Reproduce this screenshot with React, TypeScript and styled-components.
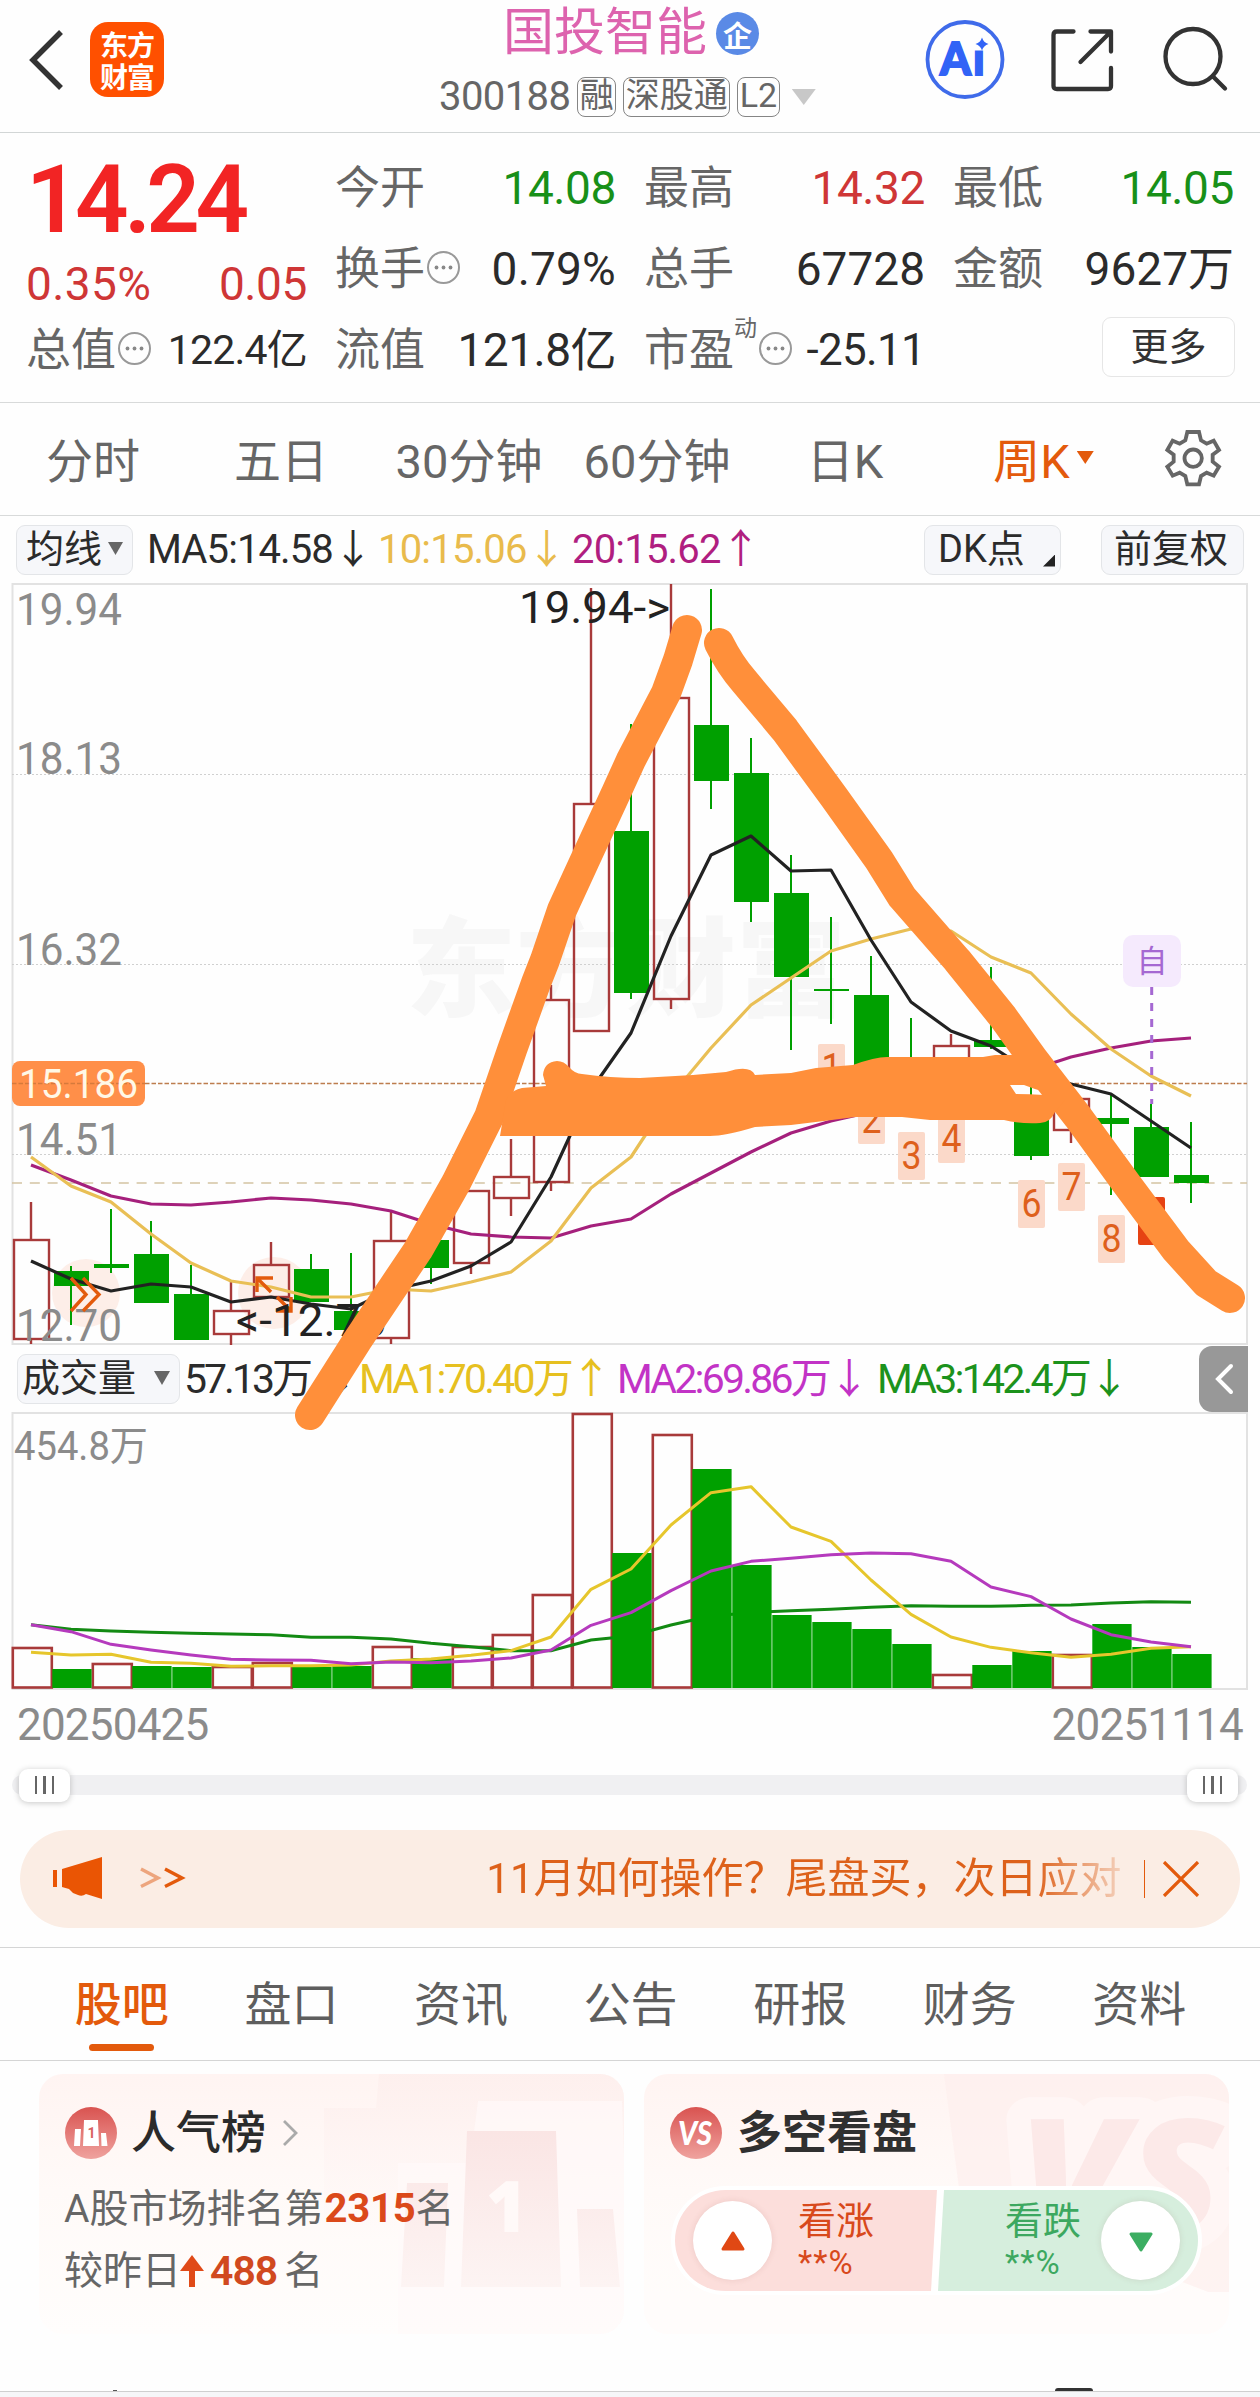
import React from "react";
import styled, { createGlobalStyle } from "styled-components";

const GlobalStyle = createGlobalStyle`
  * { box-sizing: border-box; }
  body { margin: 0; background: #fefefe; }
`;

const FONT = `Roboto, "Noto Sans CJK SC", sans-serif`;
const ORANGE = "#e35a0c";
const GREEN = "#00a000";
const RED = "#a83a3a";

const Page = styled.main`
  width: 1260px;
  height: 2397px;
  overflow: hidden;
  background: #fefefe;
  color: #2b2b2b;
  font-family: ${FONT};
  display: flex;
  flex-direction: column;
`;

const Row = styled.div<{ $gap?: number; $h?: number; $mt?: number; $ml?: string; $mr?: number }>`
  display: flex;
  align-items: center;
  gap: ${(p) => p.$gap ?? 0}px;
  height: ${(p) => (p.$h ? `${p.$h}px` : "auto")};
  margin-top: ${(p) => p.$mt ?? 0}px;
  margin-left: ${(p) => p.$ml ?? "0"};
  margin-right: ${(p) => p.$mr ?? 0}px;
`;

const Txt = styled.span<{ $size: number; $color?: string; $ls?: number; $weight?: number; $ml?: number; $up?: number; $w?: number }>`
  font-size: ${(p) => p.$size}px;
  line-height: 1;
  color: ${(p) => p.$color ?? "#2b2b2b"};
  letter-spacing: ${(p) => p.$ls ?? 0}px;
  font-weight: ${(p) => p.$weight ?? 400};
  margin-left: ${(p) => p.$ml ?? 0}px;
  margin-bottom: ${(p) => p.$up ?? 0}px;
  width: ${(p) => (p.$w ? `${p.$w}px` : "auto")};
  white-space: nowrap;
`;

/* ---------- header ---------- */
const Header = styled.header`
  height: 133px;
  flex: none;
  border-bottom: 1px solid #d2d6d6;
  display: grid;
  grid-template-columns: 420px 1fr 420px;
`;
const HeaderLeft = styled.div`
  display: flex;
  align-items: flex-start;
  padding: 22px 0 0 27px;
  gap: 25px;
`;
const BackIcon = styled.svg`
  margin-top: 7px;
`;
const Logo = styled.div`
  width: 74px;
  height: 75px;
  border-radius: 18px;
  background: #ff5000;
  color: #fff;
  display: grid;
  place-content: center;
  font: 600 28px/32px "Noto Sans CJK SC", sans-serif;
  letter-spacing: -1px;
  text-align: center;
`;
const HeaderMid = styled.div`
  padding: 6px 0 0 19px;
`;
const TitleRow = styled.div`
  display: flex;
  align-items: center;
  height: 55px;
  padding-left: 64px;
  gap: 9px;
`;
const Verified = styled.div`
  width: 43px;
  height: 43px;
  border-radius: 50%;
  background: #5a8ae6;
  color: #fff;
  display: grid;
  place-content: center;
  font: 700 29px/36px "Noto Sans CJK SC", sans-serif;
`;
const SubRow = styled.div`
  display: flex;
  align-items: center;
  gap: 7px;
  height: 42px;
  margin-top: 15px;
`;
const Tag = styled.span`
  height: 40px;
  border: 1.5px solid #858585;
  border-radius: 8px;
  padding: 0 1.5px;
  font-size: 34px;
  line-height: 35px;
  color: #666;
  white-space: nowrap;
`;
const Triangle = styled.i<{ $w: number; $h: number; $c: string; $ml?: number }>`
  width: ${(p) => p.$w}px;
  height: ${(p) => p.$h}px;
  background: ${(p) => p.$c};
  clip-path: polygon(0 0, 100% 0, 50% 100%);
  margin-left: ${(p) => p.$ml ?? 0}px;
  flex: none;
`;
const HeaderRight = styled.div`
  display: flex;
  padding: 18px 0 0 85px;
`;

/* ---------- quote ---------- */
const Quote = styled.section`
  height: 270px;
  flex: none;
  border-bottom: 1px solid #d8dada;
  padding: 14px 27px 0 26px;
  display: grid;
  grid-template-columns: repeat(4, 281px);
  grid-template-rows: repeat(3, 81px);
  column-gap: 28px;
`;
const PriceCell = styled.div`
  grid-row: span 2;
  padding-top: 6px;
`;
const Price = styled.div`
  font-size: 94px;
  line-height: 94px;
  font-weight: 600;
  color: #f22424;
  letter-spacing: -4.6px;
`;
const ChangeRow = styled.div`
  display: flex;
  justify-content: space-between;
  margin-top: 11px;
`;
const Cell = styled.div`
  display: flex;
  align-items: center;
  justify-content: space-between;
`;
const Label = styled.span`
  font-size: 45px;
  line-height: 50px;
  color: #666;
  display: flex;
  align-items: center;
  white-space: nowrap;
  padding-top: 2px;
`;
const InfoIcon = styled.svg`
  margin: -4px 0 0 1px;
`;
const Value = styled.span<{ $c?: string; $size?: number; $ls?: number }>`
  font-size: ${(p) => p.$size ?? 46}px;
  line-height: 50px;
  letter-spacing: ${(p) => p.$ls ?? -0.4}px;
  color: ${(p) => p.$c ?? "#2b2b2b"};
  white-space: nowrap;
  padding-top: 1px;
`;
const Sup = styled.sup`
  font-size: 23px;
  line-height: 24px;
  align-self: flex-start;
  margin-top: -9px;
`;
const MoreButton = styled.button`
  width: 133px;
  height: 60px;
  margin: 0 -1px 5px auto;
  border: 1.5px solid #e6e6e6;
  border-radius: 9px;
  background: #fff;
  color: #333;
  font: 38px/50px ${FONT};
  padding: 0;
`;

/* ---------- period tabs ---------- */
const Periods = styled.nav`
  height: 113px;
  flex: none;
  border-bottom: 1px solid #d8dada;
  display: grid;
  grid-template-columns: repeat(6, 188px) 132px;
`;
const Period = styled.div<{ $on?: boolean }>`
  display: flex;
  align-items: center;
  justify-content: center;
  gap: 7px;
  font-size: 47px;
  color: ${(p) => (p.$on ? ORANGE : "#666")};
  padding: 0 2px 3px ${(p) => (p.$on ? 21 : 0)}px;
  white-space: nowrap;
`;

/* ---------- indicator bars ---------- */
const Indicators = styled.div<{ $h: number; $pl: number }>`
  height: ${(p) => p.$h}px;
  flex: none;
  display: flex;
  align-items: center;
  padding-left: ${(p) => p.$pl}px;
`;
const Chip = styled.div<{ $w: number; $size?: number }>`
  width: ${(p) => p.$w}px;
  height: 50px;
  flex: none;
  border: 1.5px solid #e3e5e8;
  border-radius: 9px;
  background: #f6f7fa;
  display: flex;
  align-items: center;
  justify-content: space-between;
  padding: 0 9px 2px;
  font-size: ${(p) => p.$size ?? 38}px;
  line-height: 1;
  white-space: nowrap;
`;
const ChipText = styled.span<{ $ml: number }>`
  margin-left: ${(p) => p.$ml}px;
`;
const CornerMark = styled.i`
  width: 12px;
  height: 12px;
  background: #222;
  clip-path: polygon(100% 0, 100% 100%, 0 100%);
  align-self: flex-end;
  margin: 0 -4px 5px 0;
`;
const ChartArea = styled.section`
  position: relative;
  height: 1174px;
  flex: none;
  display: flex;
  flex-direction: column;
`;
const Scribble = styled.svg`
  position: absolute;
  left: 0;
  top: 0;
  pointer-events: none;
`;
const Block = styled.svg`
  display: block;
  flex: none;
`;
const Collapse = styled.div`
  margin-left: auto;
  margin-right: 12px;
  width: 49px;
  flex: none;
  height: 66px;
  background: #989898;
  border-radius: 13px 0 0 13px;
  display: grid;
  place-content: center;
`;

/* ---------- dates + range ---------- */
const Dates = styled.div`
  height: 70px;
  flex: none;
  display: flex;
  justify-content: space-between;
  align-items: center;
  padding: 0 17px 0 17px;
`;
const Range = styled.div`
  height: 20px;
  flex: none;
  margin: 15px 13px 0 12px;
  border-radius: 10px;
  background: #f0f0f2;
  display: flex;
  justify-content: space-between;
  align-items: center;
  padding: 0 9px 0 7px;
`;
const Handle = styled.div`
  width: 51px;
  height: 33px;
  border-radius: 9px;
  background: #fff;
  box-shadow: 0 1px 6px rgba(0, 0, 0, 0.22);
  display: flex;
  align-items: center;
  justify-content: center;
  gap: 6px;
`;
const Grip = styled.i`
  width: 2.4px;
  height: 18px;
  background: #666;
`;

/* ---------- promo ---------- */
const Promo = styled.div`
  margin: 35px 20px 0;
  height: 98px;
  flex: none;
  border-radius: 49px;
  background: #fbede4;
  display: flex;
  align-items: center;
  padding: 0 40px 0 31px;
`;
const PromoText = styled.div`
  margin-left: auto;
  font-size: 42px;
  line-height: 60px;
  letter-spacing: 0;
  white-space: nowrap;
  color: transparent;
  background: linear-gradient(90deg, #dd611a 86%, #f6d9c8 101%);
  background-clip: text;
  -webkit-background-clip: text;
`;
const Bar = styled.i`
  width: 1.5px;
  height: 38px;
  background: ${ORANGE};
  margin: 0 17px 0 22px;
`;

/* ---------- content tabs ---------- */
const Tabs = styled.nav`
  margin-top: 19px;
  height: 114px;
  flex: none;
  border-top: 1px solid #d5d5d5;
  border-bottom: 1px solid #d5d5d5;
  display: grid;
  grid-template-columns: repeat(7, 169.6px);
  padding-left: 37px;
`;
const Tab = styled.div<{ $on?: boolean }>`
  display: flex;
  flex-direction: column;
  align-items: center;
  font-size: 47px;
  line-height: 60px;
  padding-top: 27px;
  color: ${(p) => (p.$on ? ORANGE : "#5e5e5e")};
  font-weight: ${(p) => (p.$on ? 500 : 400)};
`;
const Underline = styled.i`
  width: 65px;
  height: 7px;
  border-radius: 4px;
  background: ${ORANGE};
  margin-top: 9px;
`;

/* ---------- cards ---------- */
const Cards = styled.section`
  padding: 13px 31px 0 39px;
  display: grid;
  grid-template-columns: 585px 585px;
  column-gap: 20px;
  height: 329px;
  flex: none;
`;
const Card = styled.article`
  position: relative;
  height: 260px;
  border-radius: 24px;
  overflow: hidden;
  background: linear-gradient(180deg, #fff4f2 0%, #fffaf8 45%, #fffdfc 100%);
  padding: 32px 25px 0;
`;
const Backdrop = styled.svg`
  position: absolute;
  left: 0;
  top: 0;
`;
const CardBody = styled.div`
  position: relative;
`;
const Chevron = styled.svg`
  margin-left: 15px;
`;
const UpArrow = styled.svg`
  margin: 0 5px 0 -2px;
`;
const Pill = styled.div`
  margin: 26px 0 0 2px;
  width: 531px;
  height: 109px;
  border-radius: 55px;
  border: 4px solid #fff;
  background: #fff;
  overflow: hidden;
  display: flex;
`;
const Half = styled.div<{ $up?: boolean }>`
  width: 262px;
  height: 101px;
  flex: none;
  background: ${(p) => (p.$up ? "#fcdedb" : "#d6eedd")};
  clip-path: ${(p) => (p.$up ? "polygon(0 0, 100% 0, 256px 100%, 0 100%)" : "polygon(7px 0, 100% 0, 100% 100%, 1px 100%)")};
  color: ${(p) => (p.$up ? "#d8491c" : "#3ca860")};
  display: flex;
  align-items: center;
  padding-left: ${(p) => (p.$up ? 18 : 68)}px;
  gap: ${(p) => (p.$up ? 26 : 20)}px;
`;
const Knob = styled.div`
  width: 79px;
  height: 79px;
  border-radius: 50%;
  background: #fff;
  box-shadow: 0 0 6px rgba(120, 60, 50, 0.12);
  display: grid;
  place-content: center;
`;
const Vote = styled.div`
  font-size: 38px;
  line-height: 42px;
  padding-bottom: 3px;
`;
const VotePct = styled.div`
  font-size: 33px;
  line-height: 36px;
  letter-spacing: 1px;
`;
const Footer = styled.footer`
  flex: 1;
  border-top: 1px solid #cfcfcf;
  background: #f6f6f8;
`;
const Peek = styled.div`
  height: 1px;
  flex: none;
  display: flex;
  align-items: flex-end;
  padding-left: 113px;
`;
const PeekDot = styled.i`
  width: 4px;
  height: 1px;
  background: #555;
`;
const PeekBar = styled.i`
  width: 38px;
  height: 3px;
  border-radius: 3px 3px 0 0;
  background: #333;
  margin-left: 938px;
`;

const Info = () => (
  <InfoIcon width="35" height="35" viewBox="0 0 35 35">
    <circle cx="17.5" cy="17.5" r="15.5" fill="none" stroke="#999" strokeWidth="2" />
    {[10.5, 17.5, 24.5].map((x) => (
      <circle key={x} cx={x} cy="17.5" r="1.9" fill="#888" />
    ))}
  </InfoIcon>
);

/* [high, bodyTop, bodyBottom, low, rising] in page pixels */
const candles: [number, number, number, number, number][] = [
  [1202, 1240, 1339, 1344, 1], [1266, 1271, 1286, 1325, 0], [1209, 1264, 1268, 1273, 0],
  [1221, 1254, 1303, 1303, 0], [1265, 1294, 1340, 1340, 0], [1282, 1311, 1334, 1345, 1],
  [1242, 1265, 1297, 1297, 1], [1254, 1269, 1302, 1302, 0], [1253, 1311, 1330, 1330, 0],
  [1212, 1241, 1338, 1344, 1], [1238, 1240, 1268, 1284, 0], [1191, 1191, 1263, 1274, 1],
  [1139, 1177, 1198, 1216, 1], [985, 1000, 1182, 1191, 1], [588, 804, 1031, 1031, 1],
  [724, 831, 993, 999, 0], [584, 698, 999, 1009, 1], [589, 725, 781, 809, 0],
  [738, 773, 902, 922, 0], [855, 893, 977, 1050, 0], [917, 989, 991, 1024, 0],
  [956, 995, 1075, 1080, 0], [1018, 1075, 1085, 1090, 0], [1034, 1046, 1066, 1070, 1],
  [967, 1040, 1047, 1049, 0], [1086, 1100, 1156, 1160, 0], [1099, 1099, 1130, 1143, 1],
  [1094, 1118, 1124, 1195, 0], [1104, 1127, 1177, 1177, 0], [1122, 1175, 1183, 1203, 0],
];
const ma5 = [1261, 1279, 1291, 1284, 1287, 1302, 1297, 1304, 1309, 1290, 1281, 1266, 1242, 1177, 1090, 1033, 936, 855, 836, 871, 870, 940, 1002, 1031, 1046, 1072, 1084, 1094, 1121, 1148];
const ma10 = [1157, 1186, 1202, 1234, 1263, 1281, 1287, 1297, 1297, 1289, 1291, 1282, 1272, 1241, 1188, 1157, 1096, 1048, 1005, 978, 951, 939, 929, 931, 957, 973, 1014, 1049, 1076, 1096];
const ma20 = [1165, 1180, 1196, 1204, 1205, 1202, 1198, 1200, 1204, 1211, 1224, 1234, 1237, 1238, 1226, 1219, 1194, 1173, 1152, 1133, 1121, 1112, 1104, 1094, 1084, 1070, 1057, 1048, 1041, 1038];
const line = (v: number[]) => v.map((y, i) => `${31 + 40 * i},${y}`).join(" ");
const counts: [string, number, number][] = [
  ["1", 818, 1044], ["2", 858, 1096], ["3", 898, 1132], ["4", 938, 1115],
  ["6", 1018, 1180], ["7", 1058, 1163], ["8", 1098, 1215],
];
const scale: [string, number][] = [["19.94", 625], ["18.13", 774], ["16.32", 965], ["14.51", 1155], ["12.70", 1341]];

const PriceChart = () => (
  <Block width="1260" height="763" viewBox="0 583 1260 763" fontFamily={FONT}>
    <text x="406" y="1008" fontSize="108" fontWeight="900" fill="#f7f7f7" textLength="440" lengthAdjust="spacingAndGlyphs">东方财富</text>
    <path d="M12.5 1344V584H1247V1344Z" fill="none" stroke="#e2e2e2" strokeWidth="2" />
    {[774.5, 964.5, 1154.5].map((y) => (
      <path key={y} d={`M12 ${y}H1247`} stroke="#d0d0d0" strokeWidth="1" strokeDasharray="2 2" />
    ))}
    <path d="M12 1183H1247" stroke="#d3c3a2" strokeWidth="1.6" strokeDasharray="10 7.8" />
    <path d="M145 1083.5H1247" stroke="#bd7d4e" strokeWidth="1.6" strokeDasharray="4.5 2" />
    <circle cx="86" cy="1293" r="34" fill="#fdeee8" />
    <circle cx="274" cy="1293" r="36" fill="#fdeee8" />
    {candles.map(([h, t, b, l, up], i) => {
      const x = 31 + 40 * i;
      return up ? (
        <g key={i} stroke={RED} strokeWidth="2.4" fill="none">
          <path d={`M${x} ${h}V${t}M${x} ${b}V${l}`} />
          <rect x={x - 17} y={t} width="35" height={b - t} />
        </g>
      ) : (
        <g key={i} fill={GREEN}>
          <rect x={x - 1} y={h} width="2" height={l - h} />
          <rect x={x - 17} y={t} width="35" height={b - t} />
        </g>
      );
    })}
    {scale.map(([t, y]) => (
      <text key={t} x="16" y={y} fontSize="44" fill="#8b8b8b" textLength="106" lengthAdjust="spacingAndGlyphs">{t}</text>
    ))}
    <g fill="none" strokeWidth="3.2" strokeLinejoin="round">
      <polyline points={line(ma20)} stroke="#a5207c" />
      <polyline points={line(ma10)} stroke="#e9bf55" />
      <polyline points={line(ma5)} stroke="#222" />
    </g>
    <g fill="none" stroke={ORANGE} strokeWidth="3.4">
      <path d="M71 1278L86 1294.5L71 1311M83 1278L99 1294.5L83 1311" />
      <path d="M273 1278H257V1292M258 1279L271 1292M276 1311H291V1297M290 1310L277 1297" />
    </g>
    <g fontSize="44" fill="#222">
      <text x="519" y="623" textLength="151" lengthAdjust="spacingAndGlyphs">19.94-&gt;</text>
      <text x="236" y="1336" textLength="151" lengthAdjust="spacingAndGlyphs">&lt;-12.70</text>
    </g>
    {counts.map(([t, x, y]) => (
      <g key={t}>
        <rect x={x} y={y} width="27" height="48" rx="2" fill="#fbd9c9" />
        <text x={x + 13.5} y={y + 37} fontSize="38" fill="#de601c" textAnchor="middle" textLength="20" lengthAdjust="spacingAndGlyphs">{t}</text>
      </g>
    ))}
    <rect x="1138" y="1197" width="27" height="48" rx="2" fill="#e64213" />
    <text x="1151.5" y="1234" fontSize="37" fill="#fff" textAnchor="middle">9</text>
    <path d="M1151.7 987V1104" stroke="#a568d2" strokeWidth="3" strokeDasharray="8 8" />
    <rect x="1123" y="935" width="58" height="52" rx="10" fill="#f5eafd" />
    <text x="1152" y="972" fontSize="31" fill="#a568d2" textAnchor="middle">自</text>
    <rect x="12" y="1061" width="133" height="45" rx="8" fill="#ff8f49" />
    <path d="M12 1083.5H145" stroke="#d57a3c" strokeWidth="1.4" strokeDasharray="4.5 2" />
    <text x="19" y="1098" fontSize="41" fill="#fff8e6" textLength="119" lengthAdjust="spacingAndGlyphs">15.186</text>
  </Block>
);

const volTops = [1648, 1669, 1664, 1666, 1667, 1667, 1663, 1667, 1666, 1647, 1658, 1647, 1635, 1595, 1414, 1553, 1435, 1469, 1565, 1615, 1622, 1629, 1644, 1675, 1665, 1651, 1655, 1624, 1647, 1654];
const volUp = new Set([0, 2, 5, 6, 9, 11, 12, 13, 14, 16, 23, 26]);
const third = (v: number[]) => line(v.map((z) => 1400 + z / 3));
const vYellow = [757, 765, 763, 787, 790, 799, 797, 797, 795, 783, 777, 766, 752, 711, 568, 507, 375, 278, 260, 381, 424, 540, 643, 711, 742, 758, 772, 763, 745, 740];
const vPurple = [674, 695, 733, 750, 765, 778, 780, 781, 791, 786, 788, 783, 774, 750, 676, 638, 572, 513, 484, 475, 464, 459, 461, 484, 561, 590, 657, 704, 726, 740];
const vGreen = [674, 688, 693, 697, 700, 702, 704, 712, 712, 717, 730, 740, 752, 752, 720, 708, 675, 648, 638, 632, 628, 622, 617, 619, 619, 616, 615, 609, 605, 607];

const VolumeChart = () => (
  <Block width="1260" height="278" viewBox="0 1412 1260 278" fontFamily={FONT}>
    <path d="M12.5 1689V1413H1247V1689Z" fill="none" stroke="#e2e2e2" strokeWidth="2" />
    <text x="14" y="1460" fontSize="40" fill="#8b8b8b" textLength="134" lengthAdjust="spacingAndGlyphs">454.8万</text>
    {volTops.map((t, i) =>
      volUp.has(i) ? <rect key={i} x={12.8 + 40 * i} y={t} width="39" height={1687.5 - t} fill="none" stroke={RED} strokeWidth="2.6" /> : null
    )}
    <polyline points={third(vGreen)} fill="none" stroke="#138a13" strokeWidth="3" />
    {volTops.map((t, i) =>
      volUp.has(i) ? null : <rect key={i} x={12.3 + 40 * i} y={t} width="39.3" height={1688 - t} fill={GREEN} />
    )}
    <g fill="none" strokeWidth="3" strokeLinejoin="round">
      <polyline points={third(vYellow)} stroke="#e6c62c" />
      <polyline points={third(vPurple)} stroke="#b53abd" />
    </g>
  </Block>
);

const Drawing = () => (
  <Scribble width="1260" height="974" viewBox="0 516 1260 974">
    <g fill="none" stroke="#ff8f3a" strokeWidth="30" strokeLinecap="round" strokeLinejoin="round">
      <path d="M310 1415L357 1341L418 1250L456 1183L489 1117L512 1050L536 983L545 960L562 910L585 860L616 793L631 760L643 737L666 693L678 660L687 630" />
      <path d="M719 643Q730 665 744 681L785 730L834 797L879 860L902 897L957 960L1003 1017L1034 1060L1078 1117L1126 1183L1176 1250L1206 1283L1230 1298" />
    </g>
    <path
      fill="#ff8f3a"
      fillRule="evenodd"
      d="M500 1136L506 1100Q511 1090 522 1088L546 1086L543 1075Q544 1062 557 1061Q564 1061 569 1067Q575 1074 582 1074Q610 1078 640 1078L693 1075L726 1072Q750 1064 755 1075L791 1073L816 1068L853 1065Q875 1057 887 1057H983L995 1055H1020L1065 1100L1055 1112Q1050 1123 1040 1123Q1020 1124 1004 1120H930L902 1117H855L824 1121L791 1125L755 1127Q725 1136 710 1136ZM1010 1085H1024Q1034 1089 1042 1091L1044 1095Q1030 1094 1016 1094Z"
    />
  </Scribble>
);

const App = () => (
  <Page>
    <GlobalStyle />
    <Header>
      <HeaderLeft>
        <BackIcon width="38" height="62" viewBox="0 0 38 62">
          <path d="M34 3L6 31L34 59" fill="none" stroke="#333" strokeWidth="5.5" />
        </BackIcon>
        <Logo>东方<br />财富</Logo>
      </HeaderLeft>
      <HeaderMid>
        <TitleRow>
          <Txt $size={51} $color="#dd63ae" $up={2}>国投智能</Txt>
          <Verified>企</Verified>
        </TitleRow>
        <SubRow>
          <Txt $size={40} $color="#666" $ls={-0.6}>300188</Txt>
          <Tag>融</Tag>
          <Tag>深股通</Tag>
          <Tag>L2</Tag>
          <Triangle $w={24} $h={16} $c="#c8c8c8" $ml={5} />
        </SubRow>
      </HeaderMid>
      <HeaderRight>
        <svg width="310" height="84" viewBox="925 18 310 84">
          <circle cx="965" cy="59.5" r="37.5" fill="none" stroke="#3f6bea" strokeWidth="3.8" />
          <text y="74.5" fontFamily="Lato, sans-serif" fontSize="45" fontWeight="900" fill="#3163f6" stroke="#3163f6" strokeWidth="1.8">
            <tspan x="940" textLength="31" lengthAdjust="spacingAndGlyphs">A</tspan>
            <tspan x="973">i</tspan>
          </text>
          <rect x="972.5" y="36" width="18" height="14.500" fill="#fefefe" />
          <path d="M982 37.500Q983.500 42.500 988.500 44Q983.500 45.500 982 50.500Q980.500 45.500 975.500 44Q980.500 42.500 982 37.500Z" fill="#3163f6" />
          <g fill="none" stroke="#333" strokeWidth="4.300" strokeLinejoin="round" strokeLinecap="round">
            <path d="M1073.500 31.500H1057Q1053.500 31.500 1053.500 35V86Q1053.500 89 1057 89H1108Q1111 89 1111 86V68" />
            <path d="M1090.500 31.500H1111V51.500M1110 32.500L1080.500 62" />
            <circle cx="1193" cy="56.500" r="27.500" />
            <path d="M1213 76.500L1225 88.500" />
          </g>
        </svg>
      </HeaderRight>
    </Header>

    <Quote>
      <PriceCell>
        <Price>14.24</Price>
        <ChangeRow>
          <Value $c="#cf3636" $ls={0.4}>0.35%</Value>
          <Value $c="#cf3636">0.05</Value>
        </ChangeRow>
      </PriceCell>
      <Cell><Label>今开</Label><Value $c="#189018">14.08</Value></Cell>
      <Cell><Label>最高</Label><Value $c="#cf3636">14.32</Value></Cell>
      <Cell><Label>最低</Label><Value $c="#189018">14.05</Value></Cell>
      <Cell><Label>换手<Info /></Label><Value $ls={0.2}>0.79%</Value></Cell>
      <Cell><Label>总手</Label><Value $ls={0}>67728</Value></Cell>
      <Cell><Label>金额</Label><Value $ls={0}>9627万</Value></Cell>
      <Cell><Label>总值<Info /></Label><Value $size={41} $ls={-0.8}>122.4亿</Value></Cell>
      <Cell><Label>流值</Label><Value $ls={-0.5}>121.8亿</Value></Cell>
      <Cell><Label>市盈<Sup>动</Sup><Info /></Label><Value $size={44} $ls={-0.7}>-25.11</Value></Cell>
      <Cell><MoreButton>更多</MoreButton></Cell>
    </Quote>

    <Periods>
      <Period>分时</Period>
      <Period>五日</Period>
      <Period>30分钟</Period>
      <Period>60分钟</Period>
      <Period>日K</Period>
      <Period $on>周K<Triangle $w={17} $h={13} $c={ORANGE} /></Period>
      <Period>
        <svg width="60" height="60" viewBox="41 41 180 180" fill="none" stroke="#666" strokeWidth="11.500">
          <path d="M114 53H149L155 78L172 88L193 79L209 107L190 121V142L209 157L193 184L172 175L155 185L149 210H114L108 185L91 175L70 184L54 157L73 142V121L54 107L70 79L91 88L108 78Z" />
          <circle cx="131.500" cy="131.500" r="26" />
        </svg>
      </Period>
    </Periods>

    <ChartArea>
      <Indicators $h={67} $pl={16}>
        <Chip $w={117}>均线<Triangle $w={15} $h={13} $c="#666" /></Chip>
        <Txt $size={40} $ml={14} $ls={-0.9} $w={231}>MA5:14.58↓</Txt>
        <Txt $size={40} $ls={-0.8} $color="#e9bb4c" $w={194}>10:15.06↓</Txt>
        <Txt $size={40} $ls={-0.8} $color="#b01e80">20:15.62↑</Txt>
        <Row $gap={40} $ml="auto" $mr={16}>
          <Chip $w={137}><ChipText $ml={4}>DK点</ChipText><CornerMark /></Chip>
          <Chip $w={143}><ChipText $ml={3}>前复权</ChipText></Chip>
        </Row>
      </Indicators>
      <PriceChart />
      <Indicators $h={66} $pl={17}>
        <Chip $w={163}><ChipText $ml={-5}>成交量</ChipText><Triangle $w={16} $h={14} $c="#666" /></Chip>
        <Txt $size={41} $ml={4} $ls={-3} $w={175}>57.13万 ↓</Txt>
        <Txt $size={41} $ls={-2.8} $color="#e6c020" $w={258}>MA1:70.40万↑</Txt>
        <Txt $size={41} $ls={-2.8} $color="#c233c6" $w={260}>MA2:69.86万↓</Txt>
        <Txt $size={41} $ls={-2.8} $color="#1c921c">MA3:142.4万↓</Txt>
        <Collapse>
          <svg width="24" height="34" viewBox="0 0 24 34"><path d="M19 4L6 17L19 30" fill="none" stroke="#fff" strokeWidth="4" strokeLinecap="round" /></svg>
        </Collapse>
      </Indicators>
      <VolumeChart />
      <Drawing />
    </ChartArea>

    <Dates>
      <Txt $size={44} $color="#8b8b8b" $ls={-0.8}>20250425</Txt>
      <Txt $size={44} $color="#8b8b8b" $ls={-0.8}>20251114</Txt>
    </Dates>
    <Range>
      {[0, 1].map((h) => (
        <Handle key={h}><Grip /><Grip /><Grip /></Handle>
      ))}
    </Range>

    <Promo>
      <svg width="136" height="46" viewBox="51 1857 136 46">
        <rect x="53" y="1871" width="4" height="17" fill="#ea5504" />
        <path d="M62 1870L102 1858V1900L86 1895Q82 1898 78 1896L73 1894L69 1890L62 1888Z" fill="#ea5504" />
        <path d="M141 1870L158 1879L141 1887.500" fill="none" stroke="#eda57d" strokeWidth="3.400" />
        <path d="M165 1870L182 1879L165 1887.500" fill="none" stroke={ORANGE} strokeWidth="3.400" />
      </svg>
      <PromoText>11月如何操作？尾盘买，次日应对</PromoText>
      <Bar />
      <svg width="38" height="36" viewBox="0 0 38 36"><path d="M2 1L36 35M36 1L2 35" stroke={ORANGE} strokeWidth="3.200" /></svg>
    </Promo>

    <Tabs>
      <Tab $on>股吧<Underline /></Tab>
      {["盘口", "资讯", "公告", "研报", "财务", "资料"].map((t) => (
        <Tab key={t}>{t}</Tab>
      ))}
    </Tabs>

    <Cards>
      <Card>
        <Backdrop width="585" height="260" viewBox="39 2074 585 260">
          <defs>
            <linearGradient id="halo" x1="0" y1="0" x2="0" y2="1">
              <stop offset="0" stopColor="#fdeeec" />
              <stop offset="1" stopColor="#fffbfa" />
            </linearGradient>
            <linearGradient id="fig" x1="0" y1="0" x2="0" y2="1">
              <stop offset="0" stopColor="#fae5e4" />
              <stop offset="1" stopColor="#fdf4f3" />
            </linearGradient>
          </defs>
          <path d="M379 2074H624V2240H324V2108H376Z" fill="url(#halo)" opacity=".75" />
          <path d="M404 2163H470L478 2101H622L630 2334H398V2163Z" fill="#fffaf9" opacity=".7" />
          <path d="M467 2131H556L561 2287H461ZM407 2183H448L444 2287H401ZM577 2209H613L620 2287H580Z" fill="url(#fig)" />
          <text x="486" y="2232" fontFamily="Open Sans, sans-serif" fontWeight="800" fontSize="70" fill="#fff9f8">1</text>
        </Backdrop>
        <CardBody>
          <Row>
            <svg width="54" height="54" viewBox="0 0 54 54">
              <defs>
                <linearGradient id="badge" x1="0" y1="0" x2="0" y2="1">
                  <stop offset="0" stopColor="#d95350" />
                  <stop offset="1" stopColor="#efa29e" />
                </linearGradient>
              </defs>
              <circle cx="27" cy="27" r="26" fill="url(#badge)" />
              <path d="M20 14H34L35 40H19ZM11 23H17L16 40H10ZM37 27H42L43.500 40H37.500Z" fill="#fff" />
              <text x="23.500" y="32" fontFamily="Roboto, sans-serif" fontSize="14" fontWeight="700" fill="#d9625f">1</text>
            </svg>
            <Txt $size={45} $ml={13} $weight={500}>人气榜</Txt>
            <Chevron width="20" height="30" viewBox="0 0 20 30"><path d="M3 3L15 15L3 27" fill="none" stroke="#aaa" strokeWidth="2.800" /></Chevron>
          </Row>
          <Row $h={60} $mt={19}>
            <Txt $size={39} $color="#666" $ls={0}>A股市场排名第</Txt>
            <Txt $size={40} $color="#db491a" $weight={700} $ml={1} $ls={-0.2}>2315</Txt>
            <Txt $size={39} $color="#666">名</Txt>
          </Row>
          <Row $h={60} $mt={2}>
            <Txt $size={39} $color="#666">较昨日</Txt>
            <UpArrow width="26" height="34" viewBox="0 0 26 34"><path d="M13 1L25 17H16V33H10V17H1Z" fill="#e04a18" /></UpArrow>
            <Txt $size={41} $color="#d1491f" $weight={600} $ls={-1}>488</Txt>
            <Txt $size={39} $color="#666" $ml={7}>名</Txt>
          </Row>
        </CardBody>
      </Card>
      <Card>
        <Backdrop width="585" height="260" viewBox="644 2074 585 260">
          <path d="M944 2074H1229V2300L960 2196Z" fill="#fdeeec" opacity=".65" />
          <text x="1018" y="2232" fontFamily="Open Sans, sans-serif" fontStyle="italic" fontWeight="800" fontSize="158" fill="#fce9e8" stroke="#fff6f5" strokeWidth="44" paintOrder="stroke" strokeLinejoin="round" textLength="205" lengthAdjust="spacingAndGlyphs">VS</text>
          <path d="M644 2292H1229V2334H644Z" fill="#fffcfb" />
        </Backdrop>
        <CardBody>
          <Row>
            <svg width="54" height="54" viewBox="0 0 54 54">
              <circle cx="27" cy="27" r="26" fill="url(#badge)" />
              <text x="9" y="39" fontFamily="Lato, sans-serif" fontStyle="italic" fontWeight="900" fontSize="33" fill="#fff" textLength="34" lengthAdjust="spacingAndGlyphs">VS</text>
            </svg>
            <Txt $size={45} $ml={14} $weight={600} $color="#303030">多空看盘</Txt>
          </Row>
          <Pill>
            <Half $up>
              <Knob><svg width="26" height="22" viewBox="0 0 26 22"><path d="M13 3L23 19H3Z" fill="#e04814" stroke="#e04814" strokeWidth="3" strokeLinejoin="round" /></svg></Knob>
              <div><Vote>看涨</Vote><VotePct>**%</VotePct></div>
            </Half>
            <Half>
              <div><Vote>看跌</Vote><VotePct>**%</VotePct></div>
              <Knob><svg width="26" height="22" viewBox="0 0 26 22"><path d="M13 20L23 4H3Z" fill="#3cae62" stroke="#3cae62" strokeWidth="3" strokeLinejoin="round" /></svg></Knob>
            </Half>
          </Pill>
        </CardBody>
      </Card>
    </Cards>
    <Peek><PeekDot /><PeekBar /></Peek>
    <Footer />
  </Page>
);

export default App;
